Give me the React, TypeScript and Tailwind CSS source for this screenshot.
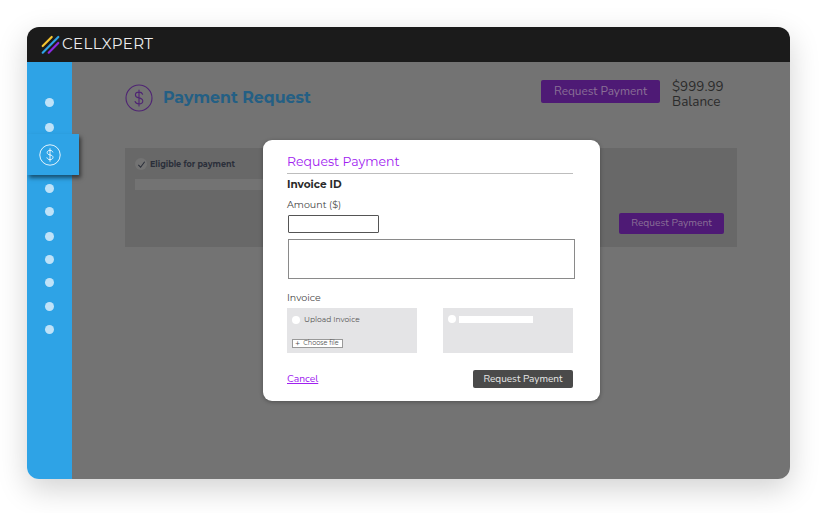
import React from 'react';

const HEADING_FONT = "font-['Montserrat','Inter','Open_Sans',sans-serif]";
const BODY_FONT = "font-['Nunito','Lato','Open_Sans',sans-serif]";

const DollarCircle: React.FC<{ className: string }> = ({ className }) => (
  <svg viewBox="0 0 28 28" fill="none" stroke="currentColor" className={className}>
    <circle cx="14" cy="14" r="13" strokeWidth="1.1" />
    <path d="M17.6 10.2c-.5-1.4-1.8-2.1-3.6-2.1-2.1 0-3.6 1.1-3.6 2.8 0 1.8 1.5 2.5 3.6 3 2.2.5 3.8 1.2 3.8 3.1 0 1.8-1.6 2.9-3.8 2.9-2 0-3.4-.9-3.9-2.4M14 6v16" strokeWidth="1.1" strokeLinecap="round" />
  </svg>
);

const Logo = () => (
  <svg viewBox="0 0 20 20" className="w-5 h-5 shrink-0" strokeWidth="2.2" strokeLinecap="round">
    <path d="M1.7 11L10.7 2" stroke="#f4c430" />
    <path d="M1.7 17.7L17.3 2" stroke="#2ea3e6" />
    <path d="M7.7 17.7L17.3 8" stroke="#8a2be2" />
  </svg>
);

const Dot: React.FC<{ className: string }> = ({ className }) => (
  <div className={`w-[9px] h-[9px] rounded-full bg-[#bfe2f8] ml-[18px] ${className}`} />
);

const Sidebar = () => (
  <aside className="w-[45px] shrink-0 bg-[#2ea3e6] flex flex-col pt-[36px]">
    <Dot className="" />
    <Dot className="mt-[16px]" />
    <div className="w-[52px] h-[41px] mt-[2px] bg-[#2ea3e6] flex items-center pl-[12px] shadow-[2px_3px_4px_rgba(0,0,0,0.5)] relative text-white">
      <DollarCircle className="w-[22px] h-[22px]" />
    </div>
    <Dot className="mt-[9px]" />
    <Dot className="mt-[14px]" />
    <Dot className="mt-[16px]" />
    <Dot className="mt-[14px]" />
    <Dot className="mt-[14px]" />
    <Dot className="mt-[15px]" />
    <Dot className="mt-[14px]" />
  </aside>
);

const Background = () => (
  <main className="flex-1 bg-[#737373] pl-[53px] pr-[53px] pt-[18px]">
    <div className="flex items-start h-[23px]">
      <div className="flex items-center mt-[4px] text-[#4f2474]">
        <DollarCircle className="w-[28px] h-[28px]" />
        <span className={`ml-[10px] text-[15.8px] font-bold text-[#245f84] ${HEADING_FONT}`}>Payment Request</span>
      </div>
      <button className={`ml-auto w-[119px] h-[23px] rounded-[2px] bg-[#4e1a75] text-[11.8px] text-[#8a7096] ${BODY_FONT}`}>
        Request Payment
      </button>
      <div className={`ml-[12px] w-[65px] -mt-[1px] text-[13.5px] leading-[15px] text-[#2b2b2b] ${BODY_FONT}`}>
        <div>$999.99</div>
        <div>Balance</div>
      </div>
    </div>
    <section className="mt-[45px] h-[99px] bg-[#686868] pl-[10px] pr-[13px] pt-[10px] flex flex-col">
      <div className="flex items-center">
        <span className="w-[12px] h-[12px] rounded-full bg-[#737373] flex items-center justify-center">
          <svg viewBox="0 0 10 10" fill="none" stroke="#2b2f3a" strokeWidth="1.2" className="w-[9px] h-[9px]">
            <path d="M1.5 5.5L4 8L8.5 2" />
          </svg>
        </span>
        <span className={`ml-[3px] text-[8px] font-bold text-[#2b2f3a] ${HEADING_FONT}`}>Eligible for payment</span>
      </div>
      <div className="mt-[9px] h-[11px] w-[200px] bg-[#737373]" />
      <button className={`self-end mt-[23px] w-[105px] h-[21px] rounded-[2px] bg-[#4e1a75] text-[10.2px] text-[#8a7096] ${BODY_FONT}`}>
        Request Payment
      </button>
    </section>
  </main>
);

const RequestModal = () => (
  <div className="absolute left-[236px] top-[113px] w-[337px] h-[261px] bg-white rounded-[9px] pl-[24px] pr-[27px] pt-[14px] shadow-[0_1px_4px_rgba(0,0,0,0.3)]">
    <h2 className={`text-[12.5px] leading-[16px] text-[#a020f0] ${HEADING_FONT}`}>Request Payment</h2>
    <div className="mt-[3px] h-[1px] bg-[#bdbdbd]" />
    <div className={`mt-[4px] text-[10.5px] leading-[13px] font-bold text-[#2a2a2a] ${HEADING_FONT}`}>Invoice ID</div>
    <label className={`block mt-[8px] text-[9.5px] leading-[12px] text-[#444] ${HEADING_FONT}`}>Amount ($)</label>
    <input className="block mt-[4px] ml-[1px] w-[91px] h-[18px] border border-[#555] rounded-[1px] bg-white" />
    <textarea className="block mt-[6px] ml-[1px] w-[287px] h-[40px] border border-[#8a8a8a] bg-white resize-none" />
    <div className={`mt-[13px] text-[9.5px] leading-[12px] text-[#444] ${HEADING_FONT}`}>Invoice</div>
    <div className="mt-[4px] flex justify-between">
      <div className="w-[130px] h-[45px] bg-[#e4e4e6] pl-[5px] pt-[7px] flex flex-col">
        <div className="flex items-center">
          <span className="w-[8px] h-[8px] rounded-full bg-white" />
          <span className={`ml-[4px] mt-[1px] text-[7.5px] leading-[8px] text-[#555] ${HEADING_FONT}`}>Upload Invoice</span>
        </div>
        <button className={`mt-[15px] w-[51px] h-[9px] bg-white border border-[#999] flex items-center pl-[2px] text-[6.5px] leading-[7px] text-[#555] ${HEADING_FONT}`}>
          <span className="mr-[3px] text-[9px] leading-[7px]">+</span>Choose file
        </button>
      </div>
      <div className="w-[130px] h-[45px] bg-[#e4e4e6] pl-[5px] pt-[7px] flex">
        <div className="flex items-center self-start">
          <span className="w-[8px] h-[8px] rounded-full bg-white" />
          <span className="ml-[3px] w-[74px] h-[7px] bg-white" />
        </div>
      </div>
    </div>
    <div className="mt-[17px] flex items-center justify-between">
      <a className={`mt-[1px] text-[10.3px] underline text-[#a020f0] ${BODY_FONT}`} href="#">Cancel</a>
      <button className={`w-[100px] h-[18px] rounded-[2px] bg-[#4a4a4a] text-[10px] text-[#e8e8e8] ${BODY_FONT}`}>
        Request Payment
      </button>
    </div>
  </div>
);

const App: React.FC = () => (
  <div className="w-[823px] h-[513px] bg-white overflow-hidden pl-[27px] pt-[27px]">
    <div className="relative w-[763px] h-[452px] rounded-[12px] overflow-visible shadow-[0_10px_30px_rgba(0,0,0,0.18)] flex flex-col">
      <header className="h-[35px] bg-[#1b1b1b] rounded-t-[12px] flex items-center pl-[14px]">
        <Logo />
        <span className={`ml-[1px] text-[15px] tracking-[0.4px] text-[#eeeeee] ${HEADING_FONT}`}>CELLXPERT</span>
      </header>
      <div className="flex-1 flex rounded-b-[12px] overflow-hidden">
        <Sidebar />
        <Background />
      </div>
      <RequestModal />
    </div>
  </div>
);

export default App;
